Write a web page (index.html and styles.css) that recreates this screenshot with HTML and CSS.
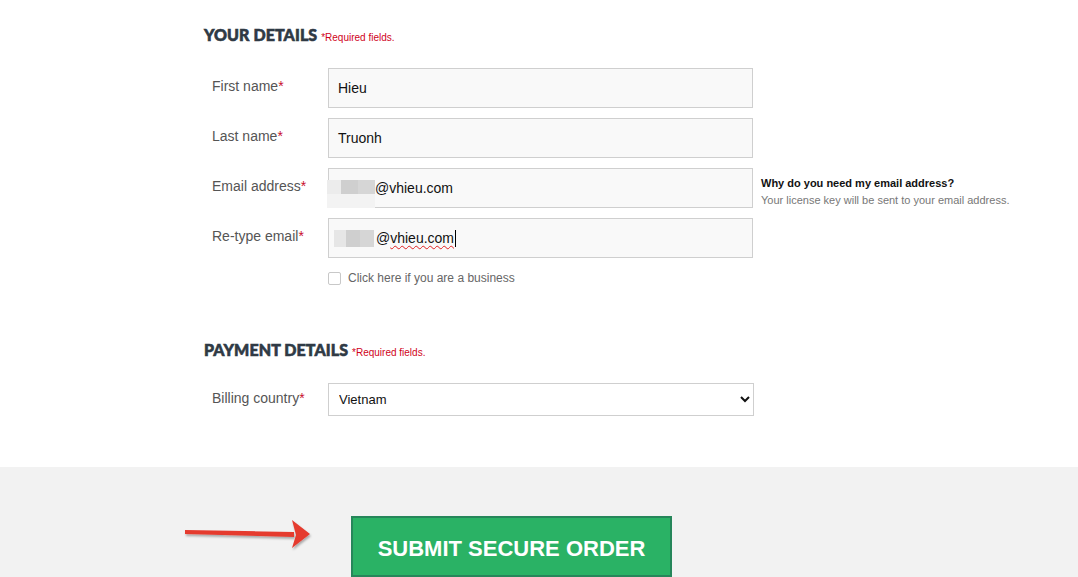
FILE: index.html
```html
<!DOCTYPE html>
<html>
<head>
<meta charset="utf-8">
<link rel="stylesheet" href="styles.css">
</head>
<body>
<main class="form-area">
  <section class="section">
    <h2 class="section-title">YOUR DETAILS <span class="required-note">*Required fields.</span></h2>
    <div class="rows">
      <div class="row">
        <label class="label">First name<span class="star">*</span></label>
        <div class="field">Hieu</div>
      </div>
      <div class="row">
        <label class="label">Last name<span class="star">*</span></label>
        <div class="field">Truonh</div>
      </div>
      <div class="row">
        <label class="label">Email address<span class="star">*</span></label>
        <div class="field"><span class="blur blur-a"></span>@vhieu.com</div>
        <div class="help">
          <div class="help-title">Why do you need my email address?</div>
          <div class="help-text">Your license key will be sent to your email address.</div>
        </div>
      </div>
      <div class="row">
        <label class="label">Re-type email<span class="star">*</span></label>
        <div class="field"><span class="blur blur-b"></span>@<span class="typo">vhieu.com</span><span class="caret"></span></div>
      </div>
      <div class="row check-row">
        <span class="label"></span>
        <label class="check"><span class="box"></span>Click here if you are a business</label>
      </div>
    </div>
  </section>
  <section class="section payment">
    <h2 class="section-title">PAYMENT DETAILS <span class="required-note">*Required fields.</span></h2>
    <div class="rows">
      <div class="row row-select">
        <label class="label">Billing country<span class="star">*</span></label>
        <select class="select"><option>Vietnam</option></select>
      </div>
    </div>
  </section>
</main>
<footer class="footer">
  <svg class="arrow" width="140" height="40" viewBox="0 0 140 40">
    <defs>
      <filter id="sh" x="-10%" y="-30%" width="120%" height="160%">
        <feDropShadow dx="1" dy="2" stdDeviation="1" flood-color="#000" flood-opacity="0.3"/>
      </filter>
    </defs>
    <g filter="url(#sh)" fill="#e53b2f">
      <polygon points="5,11 114,13 114,18 5,15"/>
      <polygon points="112,1 130,15 112,29 116,16"/>
    </g>
  </svg>
  <button class="submit">SUBMIT SECURE ORDER</button>
</footer>
</body>
</html>
```
FILE: styles.css
```css
html, body {
  margin: 0;
  padding: 0;
  background: #fff;
}
body {
  font-family: "Liberation Sans", Arial, sans-serif;
  width: 1078px;
  height: 577px;
  overflow: hidden;
}
.form-area {
  padding: 26px 0 0 204px;
  height: 467px;
  box-sizing: border-box;
}
.section-title {
  margin: 0;
  font-family: Lato, "Liberation Sans", sans-serif;
  font-weight: 900;
  font-size: 16px;
  line-height: 18px;
  color: #2f3a45;
  -webkit-text-stroke: 0.6px #2f3a45;
  letter-spacing: 0.1px;
}
.required-note {
  font-family: "Liberation Sans", Arial, sans-serif;
  font-weight: normal;
  font-size: 10px;
  color: #d0021b;
  -webkit-text-stroke: 0;
  letter-spacing: 0;
}
.rows {
  display: flex;
  flex-direction: column;
  gap: 10px;
  margin-top: 21px;
}
.row {
  display: flex;
  align-items: center;
  height: 40px;
}
.label {
  width: 116px;
  padding-left: 8px;
  font-size: 14px;
  color: #555;
  align-self: flex-start;
  padding-top: 10px;
}
.star {
  color: #c8102e;
}
.field {
  width: 425px;
  height: 40px;
  box-sizing: border-box;
  border: 1px solid #cfcfcf;
  background: #f9f9f9;
  padding: 0 9px;
  font-size: 14px;
  color: #111;
  display: flex;
  align-items: center;
  position: relative;
}
.blur {
  display: inline-block;
  background: linear-gradient(90deg, #e6e6e6 0 30%, #cfcfcf 30% 65%, #d6d6d6 65% 100%);
}
.blur-a {
  width: 48px;
  height: 28px;
  margin-left: -11px;
  margin-top: 12px;
  margin-right: 0;
  background:
    linear-gradient(180deg, transparent 0 50%, #f3f3f3 50% 100%),
    linear-gradient(90deg, #ececec 0 30%, #cfcfcf 30% 65%, #d6d6d6 65% 100%);
}
.blur-b {
  width: 40px;
  height: 17px;
  margin-left: -4px;
  margin-right: 2px;
  margin-top: 0;
}
.typo {
  text-decoration: underline wavy #e02020;
  text-decoration-thickness: 1px;
  text-underline-offset: 2px;
}
.caret {
  display: inline-block;
  width: 1px;
  height: 17px;
  background: #000;
  margin-left: 1px;
}
.help {
  margin-left: 8px;
  align-self: flex-start;
  padding-top: 8px;
  font-size: 11px;
}
.help-title {
  font-weight: bold;
  color: #111;
  line-height: 14px;
}
.help-text {
  color: #777;
  line-height: 14px;
  margin-top: 3px;
}
.check-row {
  height: 20px;
  margin-top: 0;
}
.check {
  display: flex;
  align-items: center;
  font-size: 12px;
  color: #666;
}
.box {
  width: 11px;
  height: 11px;
  border: 1px solid #c8c8c8;
  border-radius: 2px;
  background: #fff;
  margin-right: 7px;
}
.payment {
  margin-top: 53px;
}
.payment .rows {
  margin-top: 21px;
}
.row-select {
  height: 33px;
}
.row-select .label {
  padding-top: 7px;
}
.select {
  width: 426px;
  height: 33px;
  border: 1px solid #cfcfcf;
  border-radius: 0;
  background: #fff;
  font-family: "Liberation Sans", Arial, sans-serif;
  font-size: 13px;
  color: #111;
  padding: 0 6px;
  margin: 0;
}
.footer {
  background: #f2f2f2;
  height: 110px;
  position: relative;
  padding: 49px 0 0 351px;
  box-sizing: border-box;
}
.arrow {
  position: absolute;
  left: 180px;
  top: 52px;
}
.submit {
  width: 321px;
  height: 61px;
  background: #2ab265;
  border: 2px solid #26865a;
  color: #fff;
  font-family: "Liberation Sans", Arial, sans-serif;
  font-weight: bold;
  font-size: 22px;
  padding: 4px 0 0;
  margin: 0;
}
```
